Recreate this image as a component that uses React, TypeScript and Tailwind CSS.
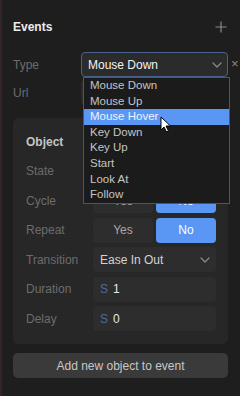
const font = { fontFamily: '"Liberation Sans", Arial, sans-serif' };

const Chevron = ({ className }: { className?: string }) => (
  <svg className={className} width="10" height="6" viewBox="0 0 10 6" fill="none">
    <path d="M1 1l4 4 4-4" stroke="currentColor" strokeWidth="1.2" strokeLinecap="round" strokeLinejoin="round" />
  </svg>
);

const Row = ({ label, children }: { label: string; children?: React.ReactNode }) => (
  <div className="flex items-center h-[25px]">
    <span className="w-[67px] text-[12px] text-[#6c6c6c]">{label}</span>
    <div className="w-[123px] h-full">{children}</div>
  </div>
);

const YesNo = () => (
  <div className="grid grid-cols-2 gap-[3px] h-full">
    <div className="rounded-[4px] bg-[#2d2d2d] flex items-center justify-center text-[12px] text-[#a8a8a8]">Yes</div>
    <div className="rounded-[4px] bg-[#5a96f4] flex items-center justify-center text-[12px] text-white">No</div>
  </div>
);

const options = ["Mouse Down", "Mouse Up", "Mouse Hover", "Key Down", "Key Up", "Start", "Look At", "Follow"];

export default function App() {
  return (
    <div
      className="relative w-[240px] h-[396px] bg-[#1e1e1e] border-l-2 border-[#35232a] pl-[11px] pr-[12px] pt-[19px] overflow-hidden"
      style={font}
    >
      {/* Header */}
      <div className="flex items-center justify-between h-[16px]">
        <span className="text-[12px] font-bold text-[#ececec]">Events</span>
        <svg width="12" height="12" viewBox="0 0 12 12" className="mr-[1px]">
          <path d="M6 0.5v11M0.5 6h11" stroke="#8a8a8a" strokeWidth="1.2" />
        </svg>
      </div>

      {/* Type */}
      <div className="flex items-center h-[25px] mt-[17px]">
        <span className="w-[68px] text-[12px] text-[#6c6c6c]">Type</span>
        <div className="flex-1 h-full rounded-[4px] border border-[#46618e] bg-[#2b2b2b] flex items-center justify-between pl-[6px] pr-[5px]">
          <span className="text-[12px] text-[#f2f2f2]">Mouse Down</span>
          <Chevron className="text-[#8a8a8a]" />
        </div>
      </div>

      {/* Url */}
      <div className="flex items-center h-[25px] mt-[3px]">
        <span className="w-[68px] text-[12px] text-[#6c6c6c]">Url</span>
        <div className="flex-1 h-full rounded-[4px] bg-[#2b2b2b]" />
      </div>

      {/* Object card */}
      <div className="mt-[13px] rounded-[6px] bg-[#272727] pl-[13px] pr-[12px] pt-[16px] pb-[13px]">
        <div className="h-[16px] flex items-center text-[12px] font-bold text-[#c4c4c4]">Object</div>
        <div className="mt-[8.5px] flex flex-col gap-[4.5px]">
          <Row label="State">
            <div className="h-full rounded-[4px] bg-[#2d2d2d]" />
          </Row>
          <Row label="Cycle">
            <YesNo />
          </Row>
          <Row label="Repeat">
            <YesNo />
          </Row>
          <Row label="Transition">
            <div className="h-full rounded-[4px] bg-[#2d2d2d] flex items-center justify-between pl-[7px] pr-[6px]">
              <span className="text-[12px] text-[#d2d2d2]">Ease In Out</span>
              <Chevron className="text-[#8a8a8a]" />
            </div>
          </Row>
          <Row label="Duration">
            <div className="h-full rounded-[4px] bg-[#2d2d2d] flex items-center gap-[5px] pl-[7px]">
              <span className="text-[12px] text-[#4d6b94]">S</span>
              <span className="text-[12px] text-[#e6e6e6]">1</span>
            </div>
          </Row>
          <Row label="Delay">
            <div className="h-full rounded-[4px] bg-[#2d2d2d] flex items-center gap-[5px] pl-[7px]">
              <span className="text-[12px] text-[#4d6b94]">S</span>
              <span className="text-[12px] text-[#e6e6e6]">0</span>
            </div>
          </Row>
        </div>
      </div>

      <button className="mt-[9px] w-full h-[25px] rounded-[5px] bg-[#3a3a3a] text-[12px] text-[#c8c8c8]">
        Add new object to event
      </button>

      {/* clear icon beside select */}
      <span className="absolute left-[229px] top-[56px] text-[13px] leading-[16px] text-[#8a8a8a]">×</span>

      {/* open dropdown */}
      <div className="absolute left-[81px] top-[77px] w-[147px] bg-[#1b1b1b] border border-[#555555]">
        {options.map((o) => (
          <div
            key={o}
            className={
              o === "Mouse Hover"
                ? "h-[15.6px] leading-[15.6px] pl-[6px] text-[11.5px] bg-[#5a96f4] text-[#eef3ff]"
                : "h-[15.6px] leading-[15.6px] pl-[6px] text-[11.5px] text-[#c4c4c4]"
            }
          >
            {o}
          </div>
        ))}
      </div>

      {/* cursor */}
      <svg className="absolute left-[158px] top-[116px]" width="12" height="17" viewBox="0 0 12 17">
        <path d="M1 1v13l3-3 2.5 5 2-1-2.5-5h4.5z" fill="#fff" stroke="#000" strokeWidth="1" strokeLinejoin="round" />
      </svg>
    </div>
  );
}
